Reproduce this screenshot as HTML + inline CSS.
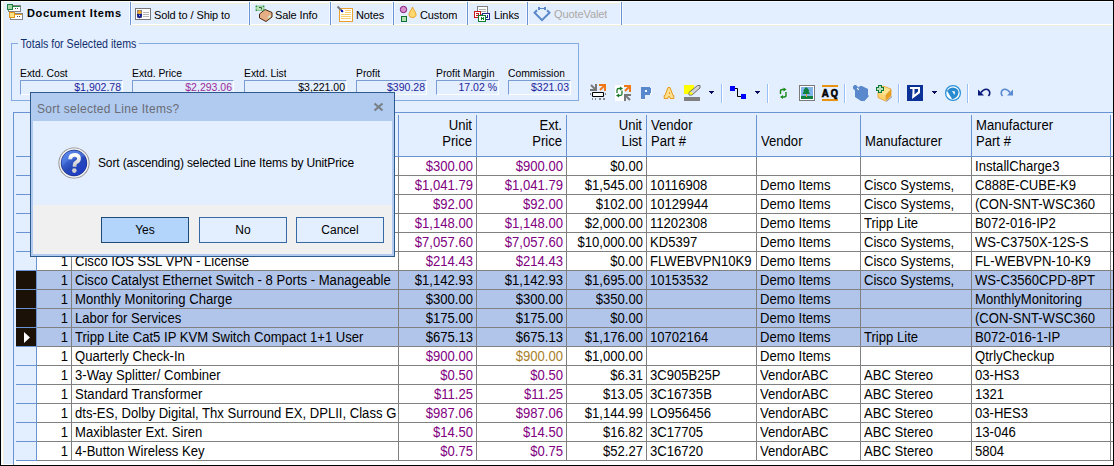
<!DOCTYPE html>
<html><head><meta charset="utf-8"><style>
*{margin:0;padding:0;box-sizing:border-box}
html,body{width:1114px;height:466px;overflow:hidden;background:#E3EEFE;font-family:"Liberation Sans",sans-serif}
.a{position:absolute}
.t{position:absolute;white-space:nowrap;overflow:hidden}
.cell{position:absolute;white-space:nowrap;overflow:hidden;font-size:14px;line-height:18px;color:#000;transform:scaleX(0.935);transform-origin:0 0}
.r{text-align:right}
</style></head><body>

<div class="a" style="left:0;top:0;width:1114px;height:1px;background:#000"></div>
<div class="a" style="left:0;top:1px;width:1113px;height:1px;background:#F2FAFF"></div>
<div class="a" style="left:1px;top:1px;width:1px;height:464px;background:#EEF6FF"></div>
<div class="a" style="left:2px;top:1px;width:1px;height:465px;background:#FFFFF8"></div>
<div class="a" style="left:3px;top:1px;width:1px;height:465px;background:#EFEEDD"></div>
<div class="a" style="left:0;top:464px;width:1113px;height:1px;background:#FFFFFF"></div>
<div class="a" style="left:0;top:0;width:1px;height:466px;background:#000"></div>
<div class="a" style="left:1113px;top:0;width:1px;height:466px;background:#000"></div>
<div class="a" style="left:0;top:465px;width:1114px;height:1px;background:#000"></div>
<div class="a" style="left:4px;top:1px;width:126px;height:1px;background:#FAFFF0"></div>
<div class="a" style="left:132px;top:24px;width:980px;height:1px;background:#FFFFFF"></div>
<div class="a" style="left:132px;top:25px;width:980px;height:1px;background:#EFEEDD"></div>
<div class="a" style="left:132px;top:2px;width:116px;height:1px;background:#FFFFFF"></div>
<div class="a" style="left:132px;top:3px;width:116px;height:1px;background:#EFEEDD"></div>
<div class="a" style="left:251px;top:2px;width:78px;height:1px;background:#FFFFFF"></div>
<div class="a" style="left:251px;top:3px;width:78px;height:1px;background:#EFEEDD"></div>
<div class="a" style="left:332px;top:2px;width:60px;height:1px;background:#FFFFFF"></div>
<div class="a" style="left:332px;top:3px;width:60px;height:1px;background:#EFEEDD"></div>
<div class="a" style="left:395px;top:2px;width:71px;height:1px;background:#FFFFFF"></div>
<div class="a" style="left:395px;top:3px;width:71px;height:1px;background:#EFEEDD"></div>
<div class="a" style="left:469px;top:2px;width:57px;height:1px;background:#FFFFFF"></div>
<div class="a" style="left:469px;top:3px;width:57px;height:1px;background:#EFEEDD"></div>
<div class="a" style="left:529px;top:2px;width:91px;height:1px;background:#FFFFFF"></div>
<div class="a" style="left:529px;top:3px;width:91px;height:1px;background:#EFEEDD"></div>
<div class="a" style="left:129px;top:2px;width:1px;height:23px;background:#F4F9FF"></div>
<div class="a" style="left:131px;top:2px;width:1px;height:23px;background:#F4F9FF"></div>
<div class="a" style="left:130px;top:2px;width:1px;height:23px;background:#6A93D4"></div>
<div class="a" style="left:248px;top:2px;width:1px;height:23px;background:#F4F9FF"></div>
<div class="a" style="left:250px;top:2px;width:1px;height:23px;background:#F4F9FF"></div>
<div class="a" style="left:249px;top:2px;width:1px;height:23px;background:#6A93D4"></div>
<div class="a" style="left:329px;top:2px;width:1px;height:23px;background:#F4F9FF"></div>
<div class="a" style="left:331px;top:2px;width:1px;height:23px;background:#F4F9FF"></div>
<div class="a" style="left:330px;top:2px;width:1px;height:23px;background:#6A93D4"></div>
<div class="a" style="left:392px;top:2px;width:1px;height:23px;background:#F4F9FF"></div>
<div class="a" style="left:394px;top:2px;width:1px;height:23px;background:#F4F9FF"></div>
<div class="a" style="left:393px;top:2px;width:1px;height:23px;background:#6A93D4"></div>
<div class="a" style="left:466px;top:2px;width:1px;height:23px;background:#F4F9FF"></div>
<div class="a" style="left:468px;top:2px;width:1px;height:23px;background:#F4F9FF"></div>
<div class="a" style="left:467px;top:2px;width:1px;height:23px;background:#6A93D4"></div>
<div class="a" style="left:526px;top:2px;width:1px;height:23px;background:#F4F9FF"></div>
<div class="a" style="left:528px;top:2px;width:1px;height:23px;background:#F4F9FF"></div>
<div class="a" style="left:527px;top:2px;width:1px;height:23px;background:#6A93D4"></div>
<div class="a" style="left:620px;top:2px;width:1px;height:23px;background:#F4F9FF"></div>
<div class="a" style="left:622px;top:2px;width:1px;height:23px;background:#F4F9FF"></div>
<div class="a" style="left:621px;top:2px;width:1px;height:23px;background:#6A93D4"></div>
<div class="t" style="left:27px;top:6px;font-size:11px;font-weight:bold;letter-spacing:0.65px;line-height:14px;color:#000">Document Items</div>
<div class="t" style="left:154px;top:8px;font-size:11px;letter-spacing:-0.1px;line-height:14px;color:#000">Sold to / Ship to</div>
<div class="t" style="left:275px;top:8px;font-size:11px;letter-spacing:-0.1px;line-height:14px;color:#000">Sale Info</div>
<div class="t" style="left:356px;top:8px;font-size:11px;letter-spacing:-0.1px;line-height:14px;color:#000">Notes</div>
<div class="t" style="left:420px;top:8px;font-size:11px;letter-spacing:-0.1px;line-height:14px;color:#000">Custom</div>
<div class="t" style="left:494px;top:8px;font-size:11px;letter-spacing:-0.1px;line-height:14px;color:#000">Links</div>
<div class="t" style="left:554px;top:7px;font-size:11px;letter-spacing:-0.1px;line-height:14px;color:#ACA8A4">QuoteValet</div>
<div class="a" style="left:11px;top:43px;width:568px;height:58px;border:1px solid #84AAE2"></div>
<div class="t" style="left:18px;top:37px;padding:0 3px;background:#E3EEFE;font-size:12.5px;transform:scaleX(0.85);transform-origin:0 0;line-height:14px;color:#0F2F6F">Totals for Selected items</div>
<div class="t" style="left:20px;top:66px;font-size:11.5px;transform:scaleX(0.9);transform-origin:0 0;line-height:14px;color:#000">Extd. Cost</div>
<div class="t r" style="left:20px;top:80px;width:103px;height:15px;border-top:1px solid #7A9CD3;border-left:1px solid #7A9CD3;border-right:1px solid #fff;border-bottom:1px solid #fff;font-size:10.5px;line-height:13px;padding-right:1px;color:#1E1E9A">$1,902.78</div>
<div class="t" style="left:132px;top:66px;font-size:11.5px;transform:scaleX(0.9);transform-origin:0 0;line-height:14px;color:#000">Extd. Price</div>
<div class="t r" style="left:132px;top:80px;width:102px;height:15px;border-top:1px solid #7A9CD3;border-left:1px solid #7A9CD3;border-right:1px solid #fff;border-bottom:1px solid #fff;font-size:10.5px;line-height:13px;padding-right:1px;color:#9A2A9A">$2,293.06</div>
<div class="t" style="left:244px;top:66px;font-size:11.5px;transform:scaleX(0.9);transform-origin:0 0;line-height:14px;color:#000">Extd. List</div>
<div class="t r" style="left:244px;top:80px;width:103px;height:15px;border-top:1px solid #7A9CD3;border-left:1px solid #7A9CD3;border-right:1px solid #fff;border-bottom:1px solid #fff;font-size:10.5px;line-height:13px;padding-right:1px;color:#000">$3,221.00</div>
<div class="t" style="left:356px;top:66px;font-size:11.5px;transform:scaleX(0.9);transform-origin:0 0;line-height:14px;color:#000">Profit</div>
<div class="t r" style="left:356px;top:80px;width:71px;height:15px;border-top:1px solid #7A9CD3;border-left:1px solid #7A9CD3;border-right:1px solid #fff;border-bottom:1px solid #fff;font-size:10.5px;line-height:13px;padding-right:1px;color:#1E1E9A">$390.28</div>
<div class="t" style="left:436px;top:66px;font-size:11.5px;transform:scaleX(0.9);transform-origin:0 0;line-height:14px;color:#000">Profit Margin</div>
<div class="t r" style="left:436px;top:80px;width:63px;height:15px;border-top:1px solid #7A9CD3;border-left:1px solid #7A9CD3;border-right:1px solid #fff;border-bottom:1px solid #fff;font-size:10.5px;line-height:13px;padding-right:1px;color:#1E1E9A">17.02 %</div>
<div class="t" style="left:508px;top:66px;font-size:11.5px;transform:scaleX(0.9);transform-origin:0 0;line-height:14px;color:#000">Commission</div>
<div class="t r" style="left:508px;top:80px;width:63px;height:15px;border-top:1px solid #7A9CD3;border-left:1px solid #7A9CD3;border-right:1px solid #fff;border-bottom:1px solid #fff;font-size:10.5px;line-height:13px;padding-right:1px;color:#1E1E9A">$321.03</div>
<div class="a" style="left:13px;top:112px;width:1100px;height:352px;background:#fff"></div>
<div class="a" style="left:13px;top:112px;width:1100px;height:45px;background:#E3EEFE;border-top:1px solid #6A93D4;border-bottom:1px solid #6A93D4"></div>
<div class="a" style="left:1111px;top:113px;width:2px;height:43px;background:#F2F7FF"></div>
<div class="a" style="left:13px;top:112px;width:1px;height:353px;background:#6A93D4"></div>
<div class="a" style="left:14px;top:157px;width:22px;height:303px;background:#E3EEFE"></div>
<div class="a" style="left:14px;top:156px;width:2px;height:1px;background:#E3EEFE"></div>
<div class="a" style="left:36px;top:115px;width:1px;height:41px;background:#6A93D4"></div>
<div class="a" style="left:71px;top:115px;width:1px;height:41px;background:#6A93D4"></div>
<div class="a" style="left:398px;top:115px;width:1px;height:41px;background:#6A93D4"></div>
<div class="a" style="left:476px;top:115px;width:1px;height:41px;background:#6A93D4"></div>
<div class="a" style="left:566px;top:115px;width:1px;height:41px;background:#6A93D4"></div>
<div class="a" style="left:646px;top:115px;width:1px;height:41px;background:#6A93D4"></div>
<div class="a" style="left:756px;top:115px;width:1px;height:41px;background:#6A93D4"></div>
<div class="a" style="left:860px;top:115px;width:1px;height:41px;background:#6A93D4"></div>
<div class="a" style="left:971px;top:115px;width:1px;height:41px;background:#6A93D4"></div>
<div class="a" style="left:1110px;top:115px;width:1px;height:41px;background:#6A93D4"></div>
<div class="t" style="left:37px;width:32.09px;text-align:right;top:117px;font-size:14px;line-height:16px;transform:scaleX(0.935);transform-origin:0 0;color:#000"><br>Qty</div>
<div class="t" style="left:76px;width:344.39px;top:117px;font-size:14px;line-height:16px;transform:scaleX(0.935);transform-origin:0 0;color:#000"><br>Description</div>
<div class="t" style="left:399px;width:78.07px;text-align:right;top:117px;font-size:14px;line-height:16px;transform:scaleX(0.935);transform-origin:0 0;color:#000">Unit<br>Price</div>
<div class="t" style="left:477px;width:90.91px;text-align:right;top:117px;font-size:14px;line-height:16px;transform:scaleX(0.935);transform-origin:0 0;color:#000">Ext.<br>Price</div>
<div class="t" style="left:567px;width:80.21px;text-align:right;top:117px;font-size:14px;line-height:16px;transform:scaleX(0.935);transform-origin:0 0;color:#000">Unit<br>List</div>
<div class="t" style="left:651px;width:112.30px;top:117px;font-size:14px;line-height:16px;transform:scaleX(0.935);transform-origin:0 0;color:#000">Vendor<br>Part #</div>
<div class="t" style="left:761px;width:105.88px;top:117px;font-size:14px;line-height:16px;transform:scaleX(0.935);transform-origin:0 0;color:#000"><br>Vendor</div>
<div class="t" style="left:865px;width:113.37px;top:117px;font-size:14px;line-height:16px;transform:scaleX(0.935);transform-origin:0 0;color:#000"><br>Manufacturer</div>
<div class="t" style="left:976px;width:143.32px;top:117px;font-size:14px;line-height:16px;transform:scaleX(0.935);transform-origin:0 0;color:#000">Manufacturer<br>Part #</div>
<div class="a" style="left:37px;top:175px;width:1076px;height:1px;background:#808080"></div>
<div class="a" style="left:16px;top:175px;width:20px;height:1px;background:#6A93D4"></div>
<div class="cell" style="left:37px;width:33.16px;text-align:right;top:157px;color:#000">1</div>
<div class="cell" style="left:75px;width:345.45px;top:157px;color:#000">Installation Charge</div>
<div class="cell" style="left:399px;width:79.14px;text-align:right;top:157px;color:#800080">$300.00</div>
<div class="cell" style="left:477px;width:91.98px;text-align:right;top:157px;color:#800080">$900.00</div>
<div class="cell" style="left:567px;width:81.28px;text-align:right;top:157px;color:#000">$0.00</div>
<div class="cell" style="left:650px;width:113.37px;top:157px;color:#000"></div>
<div class="cell" style="left:760px;width:106.95px;top:157px;color:#000"></div>
<div class="cell" style="left:864px;width:114.44px;top:157px;color:#000"></div>
<div class="cell" style="left:975px;width:144.39px;top:157px;color:#000">InstallCharge3</div>
<div class="a" style="left:37px;top:194px;width:1076px;height:1px;background:#808080"></div>
<div class="a" style="left:16px;top:194px;width:20px;height:1px;background:#6A93D4"></div>
<div class="cell" style="left:37px;width:33.16px;text-align:right;top:176px;color:#000">1</div>
<div class="cell" style="left:75px;width:345.45px;top:176px;color:#000">Cisco Unified Border Element</div>
<div class="cell" style="left:399px;width:79.14px;text-align:right;top:176px;color:#800080">$1,041.79</div>
<div class="cell" style="left:477px;width:91.98px;text-align:right;top:176px;color:#800080">$1,041.79</div>
<div class="cell" style="left:567px;width:81.28px;text-align:right;top:176px;color:#000">$1,545.00</div>
<div class="cell" style="left:650px;width:113.37px;top:176px;color:#000">10116908</div>
<div class="cell" style="left:760px;width:106.95px;top:176px;color:#000">Demo Items</div>
<div class="cell" style="left:864px;width:114.44px;top:176px;color:#000">Cisco Systems,</div>
<div class="cell" style="left:975px;width:144.39px;top:176px;color:#000">C888E-CUBE-K9</div>
<div class="a" style="left:37px;top:213px;width:1076px;height:1px;background:#808080"></div>
<div class="a" style="left:16px;top:213px;width:20px;height:1px;background:#6A93D4"></div>
<div class="cell" style="left:37px;width:33.16px;text-align:right;top:195px;color:#000">1</div>
<div class="cell" style="left:75px;width:345.45px;top:195px;color:#000">SMARTnet Service</div>
<div class="cell" style="left:399px;width:79.14px;text-align:right;top:195px;color:#800080">$92.00</div>
<div class="cell" style="left:477px;width:91.98px;text-align:right;top:195px;color:#800080">$92.00</div>
<div class="cell" style="left:567px;width:81.28px;text-align:right;top:195px;color:#000">$102.00</div>
<div class="cell" style="left:650px;width:113.37px;top:195px;color:#000">10129944</div>
<div class="cell" style="left:760px;width:106.95px;top:195px;color:#000">Demo Items</div>
<div class="cell" style="left:864px;width:114.44px;top:195px;color:#000">Cisco Systems,</div>
<div class="cell" style="left:975px;width:144.39px;top:195px;color:#000">(CON-SNT-WSC360</div>
<div class="a" style="left:37px;top:232px;width:1076px;height:1px;background:#808080"></div>
<div class="a" style="left:16px;top:232px;width:20px;height:1px;background:#6A93D4"></div>
<div class="cell" style="left:37px;width:33.16px;text-align:right;top:214px;color:#000">1</div>
<div class="cell" style="left:75px;width:345.45px;top:214px;color:#000">Tripp Lite KVM Switch</div>
<div class="cell" style="left:399px;width:79.14px;text-align:right;top:214px;color:#800080">$1,148.00</div>
<div class="cell" style="left:477px;width:91.98px;text-align:right;top:214px;color:#800080">$1,148.00</div>
<div class="cell" style="left:567px;width:81.28px;text-align:right;top:214px;color:#000">$2,000.00</div>
<div class="cell" style="left:650px;width:113.37px;top:214px;color:#000">11202308</div>
<div class="cell" style="left:760px;width:106.95px;top:214px;color:#000">Demo Items</div>
<div class="cell" style="left:864px;width:114.44px;top:214px;color:#000">Tripp Lite</div>
<div class="cell" style="left:975px;width:144.39px;top:214px;color:#000">B072-016-IP2</div>
<div class="a" style="left:37px;top:251px;width:1076px;height:1px;background:#808080"></div>
<div class="a" style="left:16px;top:251px;width:20px;height:1px;background:#6A93D4"></div>
<div class="cell" style="left:37px;width:33.16px;text-align:right;top:233px;color:#000">1</div>
<div class="cell" style="left:75px;width:345.45px;top:233px;color:#000">Cisco Catalyst 3750X</div>
<div class="cell" style="left:399px;width:79.14px;text-align:right;top:233px;color:#800080">$7,057.60</div>
<div class="cell" style="left:477px;width:91.98px;text-align:right;top:233px;color:#800080">$7,057.60</div>
<div class="cell" style="left:567px;width:81.28px;text-align:right;top:233px;color:#000">$10,000.00</div>
<div class="cell" style="left:650px;width:113.37px;top:233px;color:#000">KD5397</div>
<div class="cell" style="left:760px;width:106.95px;top:233px;color:#000">Demo Items</div>
<div class="cell" style="left:864px;width:114.44px;top:233px;color:#000">Cisco Systems,</div>
<div class="cell" style="left:975px;width:144.39px;top:233px;color:#000">WS-C3750X-12S-S</div>
<div class="a" style="left:37px;top:270px;width:1076px;height:1px;background:#808080"></div>
<div class="a" style="left:16px;top:270px;width:20px;height:1px;background:#6A93D4"></div>
<div class="cell" style="left:37px;width:33.16px;text-align:right;top:252px;color:#000">1</div>
<div class="cell" style="left:75px;width:345.45px;top:252px;color:#000">Cisco IOS SSL VPN - License</div>
<div class="cell" style="left:399px;width:79.14px;text-align:right;top:252px;color:#800080">$214.43</div>
<div class="cell" style="left:477px;width:91.98px;text-align:right;top:252px;color:#800080">$214.43</div>
<div class="cell" style="left:567px;width:81.28px;text-align:right;top:252px;color:#000">$0.00</div>
<div class="cell" style="left:650px;width:113.37px;top:252px;color:#000">FLWEBVPN10K9</div>
<div class="cell" style="left:760px;width:106.95px;top:252px;color:#000">Demo Items</div>
<div class="cell" style="left:864px;width:114.44px;top:252px;color:#000">Cisco Systems,</div>
<div class="cell" style="left:975px;width:144.39px;top:252px;color:#000">FL-WEBVPN-10-K9</div>
<div class="a" style="left:37px;top:271px;width:1076px;height:18px;background:#B1C5EA"></div>
<div class="a" style="left:16px;top:271px;width:20px;height:18px;background:#1B1106"></div>
<div class="a" style="left:37px;top:289px;width:1076px;height:1px;background:#808080"></div>
<div class="a" style="left:16px;top:289px;width:20px;height:1px;background:#6A93D4"></div>
<div class="cell" style="left:37px;width:33.16px;text-align:right;top:271px;color:#000">1</div>
<div class="cell" style="left:75px;width:345.45px;top:271px;color:#000">Cisco Catalyst Ethernet Switch - 8 Ports - Manageable</div>
<div class="cell" style="left:399px;width:79.14px;text-align:right;top:271px;color:#000">$1,142.93</div>
<div class="cell" style="left:477px;width:91.98px;text-align:right;top:271px;color:#000">$1,142.93</div>
<div class="cell" style="left:567px;width:81.28px;text-align:right;top:271px;color:#000">$1,695.00</div>
<div class="cell" style="left:650px;width:113.37px;top:271px;color:#000">10153532</div>
<div class="cell" style="left:760px;width:106.95px;top:271px;color:#000">Demo Items</div>
<div class="cell" style="left:864px;width:114.44px;top:271px;color:#000">Cisco Systems,</div>
<div class="cell" style="left:975px;width:144.39px;top:271px;color:#000">WS-C3560CPD-8PT</div>
<div class="a" style="left:37px;top:290px;width:1076px;height:18px;background:#B1C5EA"></div>
<div class="a" style="left:16px;top:290px;width:20px;height:18px;background:#1B1106"></div>
<div class="a" style="left:37px;top:308px;width:1076px;height:1px;background:#808080"></div>
<div class="a" style="left:16px;top:308px;width:20px;height:1px;background:#6A93D4"></div>
<div class="cell" style="left:37px;width:33.16px;text-align:right;top:290px;color:#000">1</div>
<div class="cell" style="left:75px;width:345.45px;top:290px;color:#000">Monthly Monitoring Charge</div>
<div class="cell" style="left:399px;width:79.14px;text-align:right;top:290px;color:#000">$300.00</div>
<div class="cell" style="left:477px;width:91.98px;text-align:right;top:290px;color:#000">$300.00</div>
<div class="cell" style="left:567px;width:81.28px;text-align:right;top:290px;color:#000">$350.00</div>
<div class="cell" style="left:650px;width:113.37px;top:290px;color:#000"></div>
<div class="cell" style="left:760px;width:106.95px;top:290px;color:#000">Demo Items</div>
<div class="cell" style="left:864px;width:114.44px;top:290px;color:#000"></div>
<div class="cell" style="left:975px;width:144.39px;top:290px;color:#000">MonthlyMonitoring</div>
<div class="a" style="left:37px;top:309px;width:1076px;height:18px;background:#B1C5EA"></div>
<div class="a" style="left:16px;top:309px;width:20px;height:18px;background:#1B1106"></div>
<div class="a" style="left:37px;top:327px;width:1076px;height:1px;background:#808080"></div>
<div class="a" style="left:16px;top:327px;width:20px;height:1px;background:#6A93D4"></div>
<div class="cell" style="left:37px;width:33.16px;text-align:right;top:309px;color:#000">1</div>
<div class="cell" style="left:75px;width:345.45px;top:309px;color:#000">Labor for Services</div>
<div class="cell" style="left:399px;width:79.14px;text-align:right;top:309px;color:#000">$175.00</div>
<div class="cell" style="left:477px;width:91.98px;text-align:right;top:309px;color:#000">$175.00</div>
<div class="cell" style="left:567px;width:81.28px;text-align:right;top:309px;color:#000">$0.00</div>
<div class="cell" style="left:650px;width:113.37px;top:309px;color:#000"></div>
<div class="cell" style="left:760px;width:106.95px;top:309px;color:#000">Demo Items</div>
<div class="cell" style="left:864px;width:114.44px;top:309px;color:#000"></div>
<div class="cell" style="left:975px;width:144.39px;top:309px;color:#000">(CON-SNT-WSC360</div>
<div class="a" style="left:37px;top:328px;width:1076px;height:18px;background:#B1C5EA"></div>
<div class="a" style="left:16px;top:328px;width:20px;height:18px;background:#1B1106"></div>
<div class="a" style="left:37px;top:346px;width:1076px;height:1px;background:#808080"></div>
<div class="a" style="left:16px;top:346px;width:20px;height:1px;background:#6A93D4"></div>
<div class="cell" style="left:37px;width:33.16px;text-align:right;top:328px;color:#000">1</div>
<div class="cell" style="left:75px;width:345.45px;top:328px;color:#000">Tripp Lite Cat5 IP KVM Switch Compact 1+1 User</div>
<div class="cell" style="left:399px;width:79.14px;text-align:right;top:328px;color:#000">$675.13</div>
<div class="cell" style="left:477px;width:91.98px;text-align:right;top:328px;color:#000">$675.13</div>
<div class="cell" style="left:567px;width:81.28px;text-align:right;top:328px;color:#000">$1,176.00</div>
<div class="cell" style="left:650px;width:113.37px;top:328px;color:#000">10702164</div>
<div class="cell" style="left:760px;width:106.95px;top:328px;color:#000">Demo Items</div>
<div class="cell" style="left:864px;width:114.44px;top:328px;color:#000">Tripp Lite</div>
<div class="cell" style="left:975px;width:144.39px;top:328px;color:#000">B072-016-1-IP</div>
<div class="a" style="left:37px;top:365px;width:1076px;height:1px;background:#808080"></div>
<div class="a" style="left:16px;top:365px;width:20px;height:1px;background:#6A93D4"></div>
<div class="cell" style="left:37px;width:33.16px;text-align:right;top:347px;color:#000">1</div>
<div class="cell" style="left:75px;width:345.45px;top:347px;color:#000">Quarterly Check-In</div>
<div class="cell" style="left:399px;width:79.14px;text-align:right;top:347px;color:#800080">$900.00</div>
<div class="cell" style="left:477px;width:91.98px;text-align:right;top:347px;color:#A8802A">$900.00</div>
<div class="cell" style="left:567px;width:81.28px;text-align:right;top:347px;color:#000">$1,000.00</div>
<div class="cell" style="left:650px;width:113.37px;top:347px;color:#000"></div>
<div class="cell" style="left:760px;width:106.95px;top:347px;color:#000">Demo Items</div>
<div class="cell" style="left:864px;width:114.44px;top:347px;color:#000"></div>
<div class="cell" style="left:975px;width:144.39px;top:347px;color:#000">QtrlyCheckup</div>
<div class="a" style="left:37px;top:384px;width:1076px;height:1px;background:#808080"></div>
<div class="a" style="left:16px;top:384px;width:20px;height:1px;background:#6A93D4"></div>
<div class="cell" style="left:37px;width:33.16px;text-align:right;top:366px;color:#000">1</div>
<div class="cell" style="left:75px;width:345.45px;top:366px;color:#000">3-Way Splitter/ Combiner</div>
<div class="cell" style="left:399px;width:79.14px;text-align:right;top:366px;color:#800080">$0.50</div>
<div class="cell" style="left:477px;width:91.98px;text-align:right;top:366px;color:#800080">$0.50</div>
<div class="cell" style="left:567px;width:81.28px;text-align:right;top:366px;color:#000">$6.31</div>
<div class="cell" style="left:650px;width:113.37px;top:366px;color:#000">3C905B25P</div>
<div class="cell" style="left:760px;width:106.95px;top:366px;color:#000">VendorABC</div>
<div class="cell" style="left:864px;width:114.44px;top:366px;color:#000">ABC Stereo</div>
<div class="cell" style="left:975px;width:144.39px;top:366px;color:#000">03-HS3</div>
<div class="a" style="left:37px;top:403px;width:1076px;height:1px;background:#808080"></div>
<div class="a" style="left:16px;top:403px;width:20px;height:1px;background:#6A93D4"></div>
<div class="cell" style="left:37px;width:33.16px;text-align:right;top:385px;color:#000">1</div>
<div class="cell" style="left:75px;width:345.45px;top:385px;color:#000">Standard Transformer</div>
<div class="cell" style="left:399px;width:79.14px;text-align:right;top:385px;color:#800080">$11.25</div>
<div class="cell" style="left:477px;width:91.98px;text-align:right;top:385px;color:#800080">$11.25</div>
<div class="cell" style="left:567px;width:81.28px;text-align:right;top:385px;color:#000">$13.05</div>
<div class="cell" style="left:650px;width:113.37px;top:385px;color:#000">3C16735B</div>
<div class="cell" style="left:760px;width:106.95px;top:385px;color:#000">VendorABC</div>
<div class="cell" style="left:864px;width:114.44px;top:385px;color:#000">ABC Stereo</div>
<div class="cell" style="left:975px;width:144.39px;top:385px;color:#000">1321</div>
<div class="a" style="left:37px;top:422px;width:1076px;height:1px;background:#808080"></div>
<div class="a" style="left:16px;top:422px;width:20px;height:1px;background:#6A93D4"></div>
<div class="cell" style="left:37px;width:33.16px;text-align:right;top:404px;color:#000">1</div>
<div class="cell" style="left:75px;width:345.45px;top:404px;color:#000">dts-ES, Dolby Digital, Thx Surround EX, DPLII, Class G</div>
<div class="cell" style="left:399px;width:79.14px;text-align:right;top:404px;color:#800080">$987.06</div>
<div class="cell" style="left:477px;width:91.98px;text-align:right;top:404px;color:#800080">$987.06</div>
<div class="cell" style="left:567px;width:81.28px;text-align:right;top:404px;color:#000">$1,144.99</div>
<div class="cell" style="left:650px;width:113.37px;top:404px;color:#000">LO956456</div>
<div class="cell" style="left:760px;width:106.95px;top:404px;color:#000">VendorABC</div>
<div class="cell" style="left:864px;width:114.44px;top:404px;color:#000">ABC Stereo</div>
<div class="cell" style="left:975px;width:144.39px;top:404px;color:#000">03-HES3</div>
<div class="a" style="left:37px;top:441px;width:1076px;height:1px;background:#808080"></div>
<div class="a" style="left:16px;top:441px;width:20px;height:1px;background:#6A93D4"></div>
<div class="cell" style="left:37px;width:33.16px;text-align:right;top:423px;color:#000">1</div>
<div class="cell" style="left:75px;width:345.45px;top:423px;color:#000">Maxiblaster Ext. Siren</div>
<div class="cell" style="left:399px;width:79.14px;text-align:right;top:423px;color:#800080">$14.50</div>
<div class="cell" style="left:477px;width:91.98px;text-align:right;top:423px;color:#800080">$14.50</div>
<div class="cell" style="left:567px;width:81.28px;text-align:right;top:423px;color:#000">$16.82</div>
<div class="cell" style="left:650px;width:113.37px;top:423px;color:#000">3C17705</div>
<div class="cell" style="left:760px;width:106.95px;top:423px;color:#000">VendorABC</div>
<div class="cell" style="left:864px;width:114.44px;top:423px;color:#000">ABC Stereo</div>
<div class="cell" style="left:975px;width:144.39px;top:423px;color:#000">13-046</div>
<div class="a" style="left:37px;top:460px;width:1076px;height:1px;background:#808080"></div>
<div class="a" style="left:16px;top:460px;width:20px;height:1px;background:#6A93D4"></div>
<div class="cell" style="left:37px;width:33.16px;text-align:right;top:442px;color:#000">1</div>
<div class="cell" style="left:75px;width:345.45px;top:442px;color:#000">4-Button Wireless Key</div>
<div class="cell" style="left:399px;width:79.14px;text-align:right;top:442px;color:#800080">$0.75</div>
<div class="cell" style="left:477px;width:91.98px;text-align:right;top:442px;color:#800080">$0.75</div>
<div class="cell" style="left:567px;width:81.28px;text-align:right;top:442px;color:#000">$52.27</div>
<div class="cell" style="left:650px;width:113.37px;top:442px;color:#000">3C16720</div>
<div class="cell" style="left:760px;width:106.95px;top:442px;color:#000">VendorABC</div>
<div class="cell" style="left:864px;width:114.44px;top:442px;color:#000">ABC Stereo</div>
<div class="cell" style="left:975px;width:144.39px;top:442px;color:#000">5804</div>
<div class="a" style="left:36px;top:157px;width:1px;height:304px;background:#6A93D4"></div>
<div class="a" style="left:71px;top:157px;width:1px;height:304px;background:#808080"></div>
<div class="a" style="left:398px;top:157px;width:1px;height:304px;background:#808080"></div>
<div class="a" style="left:476px;top:157px;width:1px;height:304px;background:#808080"></div>
<div class="a" style="left:566px;top:157px;width:1px;height:304px;background:#808080"></div>
<div class="a" style="left:646px;top:157px;width:1px;height:304px;background:#808080"></div>
<div class="a" style="left:756px;top:157px;width:1px;height:304px;background:#808080"></div>
<div class="a" style="left:860px;top:157px;width:1px;height:304px;background:#808080"></div>
<div class="a" style="left:971px;top:157px;width:1px;height:304px;background:#808080"></div>
<div class="a" style="left:1110px;top:157px;width:1px;height:304px;background:#808080"></div>
<svg class="a" style="left:23px;top:331px" width="8" height="13"><path d="M1 1 L7 6.5 L1 12 Z" fill="#fff"/></svg>
<svg class="a" style="left:0;top:0" width="1114" height="466" viewBox="0 0 1114 466" shape-rendering="crispEdges">
<!-- Document Items tab icon -->
<rect x="8.5" y="5.5" width="12" height="6" fill="#fff" stroke="#858585"/>
<rect x="12" y="6" width="8" height="1" fill="#1E8A3C"/>
<rect x="15" y="8" width="1" height="1" fill="#555"/><rect x="17" y="8" width="1" height="1" fill="#555"/>
<rect x="7.5" y="4.5" width="5" height="5" fill="#A6D6A6" stroke="#1E8040"/>
<rect x="10.5" y="13.5" width="12" height="6" fill="#fff" stroke="#858585"/>
<rect x="14" y="14" width="8" height="1" fill="#E89A1A"/>
<rect x="17" y="16" width="1" height="1" fill="#555"/><rect x="19" y="16" width="1" height="1" fill="#555"/>
<rect x="9.5" y="12.5" width="5" height="5" fill="#FFE08A" stroke="#E09A1A"/>
<!-- Sold to icon -->
<rect x="135.5" y="8.5" width="15" height="11" fill="#fff" stroke="#777"/>
<rect x="137" y="10" width="5" height="8" fill="#7A7A88"/>
<path d="M137,14 L142,14 L142,16.3 L139.5,18.5 L137,16.3 Z" fill="#1A2090" shape-rendering="auto"/>
<path d="M137.2,12.8 L138.5,10.8 L139.5,9.8 L140.5,10.8 L141.8,12.8 L139.5,14.2 Z" fill="#F0A828" shape-rendering="auto"/>
<rect x="139" y="14.5" width="1" height="1.5" fill="#7AB8F4"/>
<rect x="143" y="12" width="6" height="1" fill="#B8B8B8"/><rect x="143" y="14" width="6" height="1" fill="#B8B8B8"/><rect x="143" y="16" width="6" height="1" fill="#B8B8B8"/>
<!-- Sale info icon -->
<g shape-rendering="auto">
<path d="M259.5 14 L265 9.5 L272 12.5 L272 17 L266 21.5 L259.5 18 Z" fill="#E6AE84" stroke="#4A2A10" stroke-width="1"/>
<path d="M268 18 L270.5 15.5" stroke="#CFF5D8" stroke-width="1.5"/>
<rect x="256" y="6" width="8" height="4.5" fill="#B4E2B4" stroke="#6AB06A" stroke-width="0.6"/><circle cx="256.3" cy="6.3" r="0.7" fill="#108030"/><circle cx="263.7" cy="6.3" r="0.7" fill="#108030"/><circle cx="256.3" cy="10.2" r="0.7" fill="#108030"/><circle cx="263.7" cy="10.2" r="0.7" fill="#108030"/>
<path d="M259 7.5 L261.5 7.5 L261.5 9.5" stroke="#306040" stroke-width="1" fill="none"/>
</g>
<!-- Notes icon -->
<rect x="339.5" y="8.5" width="13" height="13" fill="#fff" stroke="#E8A030"/>
<rect x="345" y="10" width="6" height="1" fill="#F8D070"/><rect x="345" y="12" width="6" height="1" fill="#F8D070"/>
<rect x="341" y="14" width="10" height="1" fill="#F8D070"/><rect x="341" y="16" width="10" height="1" fill="#F8D070"/><rect x="341" y="18" width="10" height="1" fill="#F8D070"/>
<path d="M337.5 6.5 L343 12" stroke="#777" stroke-width="2" shape-rendering="auto"/>
<rect x="341" y="10" width="1.5" height="1.5" fill="#1010C0"/>
<!-- Custom icon -->
<g shape-rendering="auto">
<circle cx="403.5" cy="9.5" r="3.2" fill="#D890C8" stroke="#801880" stroke-width="1"/>
<path d="M412.5 7 C413 9.5 416 12 416 14.5 C416 16.5 414.5 17.5 412.5 17.5 C410.5 17.5 409 16.5 409 14.5 C409 12 412 9.5 412.5 7 Z" fill="#FFD870" stroke="#E8A020" stroke-width="1"/>
</g>
<rect x="401.5" y="16.5" width="5" height="5" fill="#B0E0B0" stroke="#107030"/>
<!-- Links icon -->
<rect x="477.5" y="6.5" width="10" height="8" fill="#fff" stroke="#808080"/>
<rect x="479" y="9" width="7" height="1" fill="#B0B0B0"/><rect x="479" y="11" width="7" height="1" fill="#B0B0B0"/>
<rect x="474.5" y="11.5" width="6" height="6" fill="#fff" stroke="#C81818"/>
<rect x="476" y="13" width="3" height="1" fill="#C81818"/><rect x="476" y="15" width="3" height="1" fill="#C81818"/><rect x="478" y="13" width="1" height="3" fill="#C81818"/>
<rect x="482.5" y="13.5" width="7" height="6" fill="#fff" stroke="#202890"/>
<rect x="485" y="15" width="1" height="3" fill="#202890"/><rect x="487" y="15" width="1" height="3" fill="#202890"/><rect x="485" y="17" width="3" height="1" fill="#202890"/>
<rect x="478.5" y="15.5" width="7" height="6" fill="#fff" stroke="#108030"/>
<rect x="481" y="17" width="1" height="3" fill="#108030"/><rect x="482" y="18" width="2" height="1" fill="#108030"/><rect x="483" y="17" width="1" height="1" fill="#108030"/><rect x="483" y="19" width="1" height="1" fill="#108030"/>
<!-- QuoteValet icon -->
<g fill="none" stroke="#5A88C8" stroke-width="2" shape-rendering="auto">
<path d="M537,10.2 L534.6,12.7 L542,20.2 L549.5,12.7 L547,10.2"/>
</g>
<rect x="538" y="7" width="2" height="3" fill="#5A88C8"/><rect x="544" y="7" width="2" height="3" fill="#5A88C8"/><rect x="540" y="8" width="4" height="1" fill="#5A88C8"/>

<!-- TOOLBAR -->
<!-- icon1 -->
<g fill="#787878">
<rect x="595" y="84" width="2" height="7"/><rect x="590" y="89" width="7" height="2"/>
</g>
<path d="M591,85 L595,89" stroke="#787878" stroke-width="2" shape-rendering="auto"/>
<g fill="#F07818">
<rect x="599" y="84" width="7" height="2"/><rect x="604" y="84" width="2" height="7"/>
</g>
<path d="M600,90 L604.5,85.5" stroke="#F07818" stroke-width="2" shape-rendering="auto"/>
<rect x="592.5" y="92.5" width="11" height="4" rx="0.6" fill="#fff" stroke="#000" stroke-width="1.1" shape-rendering="auto"/>
<g fill="#858585"><rect x="590" y="93" width="1" height="2"/><rect x="605" y="93" width="1" height="2"/>
<rect x="591.5" y="97.5" width="1.5" height="2"/><rect x="594.5" y="97.5" width="1.5" height="2"/><rect x="599" y="97.5" width="1.5" height="2"/><rect x="603" y="97.5" width="1.5" height="2"/></g>
<!-- icon2 -->
<rect x="615" y="85" width="9" height="16" fill="#fff"/>
<g fill="none" stroke="#1A7A2A" stroke-width="1.3" shape-rendering="auto">
<path d="M617 93 L617 90 Q617 88.5 619 88.5 L621 88.5"/>
<path d="M622 90.5 L622 94 Q622 95.5 620 95.5 L618 95.5"/>
</g>
<path d="M620 86.5 L623 88.5 L620 90.5 Z" fill="#1A7A2A" shape-rendering="auto"/>
<path d="M619 93.5 L616 95.5 L619 97.5 Z" fill="#1A7A2A" shape-rendering="auto"/>
<g fill="#F07818"><rect x="624" y="85" width="7" height="2"/><rect x="629" y="85" width="2" height="7"/></g>
<path d="M625 91 L629.5 86.5" stroke="#F07818" stroke-width="2" shape-rendering="auto"/>
<g fill="#787878"><rect x="624" y="94" width="7" height="2"/><rect x="624" y="94" width="2" height="7"/></g>
<path d="M625.5 95.5 L630 100" stroke="#787878" stroke-width="2" shape-rendering="auto"/>
<!-- P -->
<path d="M641,87 L649,87 L651,89 L651,93 L649,95 L645,95 L645,99 L641,99 Z" fill="#5A88CC"/>
<rect x="645" y="90" width="2" height="2" fill="#F4F8FF"/>
<path d="M645,99.5 L641,99.5 M651.5,89 L651.5,93 L649.5,95.5" stroke="#FFFFFF" stroke-width="1" fill="none" opacity="0.8"/>
<!-- A -->
<path d="M668,87.5 L670,87.5 L673,95.5 L673.8,95.5 L673.8,98.5 L670.2,98.5 L669.6,96.5 L668.4,96.5 L667.8,98.5 L664.2,98.5 L664.2,95.5 L665,95.5 Z" fill="#FFE08C" stroke="#E8961E" stroke-width="1" shape-rendering="auto"/>
<rect x="668.5" y="92" width="1" height="2" fill="#E8961E"/>
<!-- highlighter -->
<rect x="684" y="85" width="10" height="9" fill="#FFFF00"/>
<path d="M689 95 L689 92.5 L697.5 85.5 L700 85.5 L700 88 L692 95 Z" fill="#D4D4D4" stroke="#606060" stroke-width="0.9" shape-rendering="auto"/>
<path d="M689.5 94.5 L689.5 93 L691 91.8 L693 93.8 L692 94.5 Z" fill="#FFFF00" shape-rendering="auto"/>
<rect x="684" y="97" width="16" height="4" fill="#808080"/>
<!-- dropdown arrows -->
<rect x="709" y="91" width="5" height="1" fill="#0A0A60"/><rect x="710" y="92" width="3" height="1" fill="#0A0A60"/><rect x="711" y="93" width="1" height="1" fill="#0A0A60"/>
<rect x="755" y="91" width="5" height="1" fill="#0A0A60"/><rect x="756" y="92" width="3" height="1" fill="#0A0A60"/><rect x="757" y="93" width="1" height="1" fill="#0A0A60"/>
<rect x="932" y="91" width="5" height="1" fill="#0A0A60"/><rect x="933" y="92" width="3" height="1" fill="#0A0A60"/><rect x="934" y="93" width="1" height="1" fill="#0A0A60"/>
<!-- separators -->
<g fill="#98C0F8"><rect x="721" y="84" width="1" height="19"/><rect x="767" y="84" width="1" height="19"/><rect x="844" y="84" width="1" height="19"/><rect x="898" y="84" width="1" height="19"/><rect x="967" y="84" width="1" height="19"/></g>
<g fill="#fff"><rect x="722" y="84" width="1" height="19"/><rect x="768" y="84" width="1" height="19"/><rect x="845" y="84" width="1" height="19"/><rect x="899" y="84" width="1" height="19"/><rect x="968" y="84" width="1" height="19"/></g>
<!-- connector -->
<rect x="730" y="86" width="5" height="5" fill="#0000FF"/>
<path d="M735 88.5 L737.5 88.5 L737.5 96.5 L741 96.5" fill="none" stroke="#000" stroke-width="1" shape-rendering="auto"/>
<rect x="741" y="94" width="5" height="5" fill="#0000FF"/>
<!-- refresh -->
<g fill="none" stroke="#1A8A1A" stroke-width="1.4" shape-rendering="auto">
<path d="M780.5 94 L780.5 91 Q780.5 89.5 782.5 89.5 L784.5 89.5"/>
<path d="M786 92 L786 95.5 Q786 97 784 97 L782 97"/>
</g>
<path d="M783.5 87.5 L786.5 89.5 L783.5 91.5 Z" fill="#1A8A1A" shape-rendering="auto"/>
<path d="M783 95 L780 97 L783 99 Z" fill="#1A8A1A" shape-rendering="auto"/>
<!-- picture -->
<rect x="799.5" y="85.5" width="15" height="15" fill="#fff" stroke="#7A7A7A"/>
<rect x="801" y="87" width="12" height="12" fill="#80B4E8"/>
<rect x="801" y="96" width="12" height="3" fill="#108040"/>
<path d="M805.5 87.5 L807 87.5 L809.5 91 L808.5 91 L810 94 L802.5 94 L804 91 L803 91 Z" fill="#108040" shape-rendering="auto"/>
<rect x="806" y="94" width="1" height="3" fill="#F0A030"/>
<!-- AQ -->
<rect x="822" y="85" width="16" height="2" fill="#E8920F"/><rect x="822" y="99" width="16" height="2" fill="#E8920F"/>
<text x="821.8" y="97" font-family="Liberation Sans" font-weight="bold" font-size="11" textLength="7" lengthAdjust="spacingAndGlyphs" fill="#000" stroke="#000" stroke-width="0.7">A</text><text x="830.8" y="97" font-family="Liberation Sans" font-weight="bold" font-size="11" textLength="7.2" lengthAdjust="spacingAndGlyphs" fill="#000" stroke="#000" stroke-width="0.7">Q</text>
<!-- hand -->
<path d="M853,86.5 L854.5,85 L856,85 L858.5,87.5 L860,86 L862,86 L868,89 L868,95 L869,96 L864.5,101 L861,101 L855,97 L855,90.5 L853,88.5 Z" fill="#5A88CC" shape-rendering="auto"/>
<path d="M857.2,88.2 L858.8,89.8" stroke="#fff" stroke-width="1.2" shape-rendering="auto"/>
<!-- box plus -->
<g shape-rendering="auto">
<path d="M878,92.4 L883,86 L891,89 L885.5,95 Z" fill="#FFE490"/>
<path d="M878,92.4 L885.5,95 L885.5,101 L878,97.6 Z" fill="#FFD470"/>
<path d="M885.5,95 L891,89 L891,95.7 L885.5,101 Z" fill="#E8A020"/>
<path d="M878,92.4 L883,86 L891,89 L891,95.7 L885.5,101 L878,97.6 Z" fill="none" stroke="#E89A20" stroke-width="0.8"/>
<path d="M886.5,101.5 L892,96.5" stroke="#8A8A9A" stroke-width="1"/>
</g>
<path d="M878.5 85.5 L881.5 85.5 L881.5 87.5 L883.5 87.5 L883.5 90.5 L881.5 90.5 L881.5 92.5 L878.5 92.5 L878.5 90.5 L876.5 90.5 L876.5 87.5 L878.5 87.5 Z" fill="#B8E0B8" stroke="#107838" stroke-width="1"/>
<!-- dark logo -->
<rect x="907" y="85" width="16" height="16" fill="#0A3296"/>
<path d="M910,87 L920,87 L920,93 L912,99 L912.5,91.5 L912.5,89 L910,89 Z" fill="#fff" shape-rendering="auto"/>
<path d="M914.5,89 L918,89 L918,91.5 L914.5,94.5 Z" fill="#0A3296" shape-rendering="auto"/>
<!-- circle icon -->
<g shape-rendering="auto">
<circle cx="953" cy="93" r="7.4" fill="#fff" stroke="#2A90D8" stroke-width="1.3"/>
<path d="M947,90.7 Q950,87.5 952.5,87.5 Q958.5,87.8 958.5,92.5 Q958.2,97.5 952.2,99.2 Z" fill="#2A8AD0"/>
<path d="M952,91 L955,91.5 L954.5,95 Z" fill="#fff"/>
</g>
<!-- undo redo -->
<g shape-rendering="auto">
<path d="M981 92.5 Q984 88.5 987.5 89.5 Q990.5 91 989.5 94.5 L988.5 96" fill="none" stroke="#0A1A7A" stroke-width="1.6"/>
<path d="M978 89.5 L978 95.5 L984 95.5 Z" fill="#0A1A7A"/>
<path d="M1010 92.5 Q1007 88.5 1003.5 89.5 Q1000.5 91 1001.5 94.5 L1002.5 96" fill="none" stroke="#5A8AD0" stroke-width="1.6"/>
<path d="M1013 89.5 L1013 95.5 L1007 95.5 Z" fill="#5A8AD0"/>
</g>
</svg>
<div class="a" style="left:30px;top:92px;width:365px;height:165px;border:1px solid #2F5A8E;background:#B0CBEF"></div>
<div class="t" style="left:37px;top:102px;font-size:12px;letter-spacing:0.28px;line-height:15px;color:#6C6C76">Sort selected Line Items?</div>
<svg class="a" style="left:370px;top:99px" width="16" height="16"><path d="M4.5 4.5 L12.5 11.5 M12.5 4.5 L4.5 11.5" stroke="#7A8088" stroke-width="2.2"/></svg>
<div class="a" style="left:33px;top:121px;width:359px;height:84px;background:#E3EEFE"></div>
<div class="a" style="left:33px;top:205px;width:359px;height:49px;background:#F0F0F0"></div>
<svg class="a" style="left:58px;top:147px" width="32" height="32" viewBox="0 0 32 32">
<defs><linearGradient id="qg" x1="0.2" y1="0.1" x2="0.8" y2="0.95"><stop offset="0" stop-color="#4F7FE6"/><stop offset="0.55" stop-color="#2648B8"/><stop offset="1" stop-color="#1E3CC8"/></linearGradient>
<linearGradient id="qm" x1="0" y1="0" x2="0" y2="1"><stop offset="0" stop-color="#FFFFFF"/><stop offset="1" stop-color="#C8C8C8"/></linearGradient></defs>
<circle cx="16" cy="16" r="15.6" fill="#8C8C8C"/><circle cx="16" cy="16" r="14.7" fill="#F2F2F2"/><circle cx="16" cy="16" r="13.2" fill="#1C2C80"/><circle cx="16" cy="16" r="12.6" fill="url(#qg)"/>
<path d="M4 19 Q10 11 28 9 Q24 4 16 3.5 Q6 4 3.6 14 Z" fill="#6A96F0" opacity="0.35"/>
<path d="M12.2 12.2 Q12.2 7.8 16.6 7.8 Q21 7.8 21 11.6 Q21 14 18.2 15.4 Q16.6 16.3 16.6 18.3 L16.6 19.8" fill="none" stroke="url(#qm)" stroke-width="3.8"/>
<circle cx="16.3" cy="23.6" r="2.3" fill="#D0D0D0"/></svg>
<div class="t" style="left:98px;top:156px;font-size:12px;letter-spacing:-0.14px;line-height:15px;color:#000">Sort (ascending) selected Line Items by UnitPrice</div>
<div class="t" style="left:101px;top:217px;width:88px;height:26px;border:1px solid #1E4A78;background:#B3D4FB;text-align:center;font-size:12px;line-height:24px;color:#000">Yes</div>
<div class="t" style="left:199px;top:217px;width:88px;height:26px;border:1px solid #3568A4;background:#E3EEFE;text-align:center;font-size:12px;line-height:24px;color:#000">No</div>
<div class="t" style="left:296px;top:217px;width:88px;height:26px;border:1px solid #3568A4;background:#E3EEFE;text-align:center;font-size:12px;line-height:24px;color:#000">Cancel</div>
</body></html>
